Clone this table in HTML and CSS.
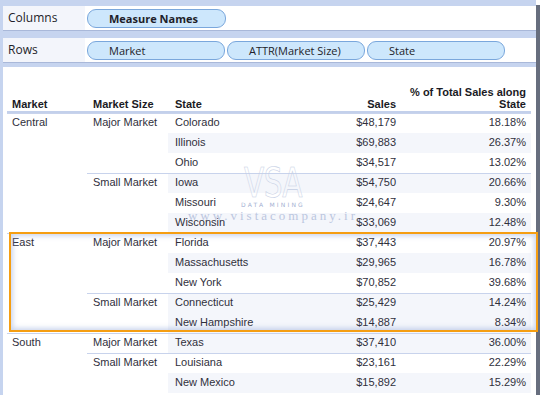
FILE: index.html
```html
<!DOCTYPE html>
<html>
<head>
<meta charset="utf-8">
<link rel="stylesheet" href="styles.css">
</head>
<body>
<div class="screen">
  <div class="workspace">
    <div class="shelf shelf-cols">
      <div class="shelf-label">Columns</div>
      <div class="shelf-field">
        <div class="pill pill-bold">Measure Names</div>
      </div>
    </div>
    <div class="shelf">
      <div class="shelf-label">Rows</div>
      <div class="shelf-field">
        <div class="pill">Market</div>
        <div class="pill">ATTR(Market Size)</div>
        <div class="pill">State</div>
      </div>
    </div>
    <div class="pane">
      <table class="grid">
        <colgroup>
          <col class="c-market"><col class="c-size"><col class="c-state"><col class="c-sales"><col class="c-pct">
        </colgroup>
        <thead>
          <tr>
            <th class="m">Market</th>
            <th class="z">Market Size</th>
            <th class="s">State</th>
            <th class="n">Sales</th>
            <th class="n">% of Total Sales along<br>State</th>
          </tr>
        </thead>
        <tbody>
          <tr class="mk">
            <td class="m" rowspan="6">Central</td>
            <td class="z" rowspan="3">Major Market</td>
            <td class="s">Colorado</td><td class="n">$48,179</td><td class="n">18.18%</td>
          </tr>
          <tr class="band"><td class="s">Illinois</td><td class="n">$69,883</td><td class="n">26.37%</td></tr>
          <tr><td class="s">Ohio</td><td class="n">$34,517</td><td class="n">13.02%</td></tr>
          <tr class="sz band">
            <td class="z" rowspan="3">Small Market</td>
            <td class="s">Iowa</td><td class="n">$54,750</td><td class="n">20.66%</td>
          </tr>
          <tr><td class="s">Missouri</td><td class="n">$24,647</td><td class="n">9.30%</td></tr>
          <tr class="band"><td class="s">Wisconsin</td><td class="n">$33,069</td><td class="n">12.48%</td></tr>
          <tr class="mk">
            <td class="m" rowspan="5">East</td>
            <td class="z" rowspan="3">Major Market</td>
            <td class="s">Florida</td><td class="n">$37,443</td><td class="n">20.97%</td>
          </tr>
          <tr class="band"><td class="s">Massachusetts</td><td class="n">$29,965</td><td class="n">16.78%</td></tr>
          <tr><td class="s">New York</td><td class="n">$70,852</td><td class="n">39.68%</td></tr>
          <tr class="sz band">
            <td class="z" rowspan="2">Small Market</td>
            <td class="s">Connecticut</td><td class="n">$25,429</td><td class="n">14.24%</td>
          </tr>
          <tr class="band"><td class="s">New Hampshire</td><td class="n">$14,887</td><td class="n">8.34%</td></tr>
          <tr class="mk band">
            <td class="m" rowspan="3">South</td>
            <td class="z">Major Market</td>
            <td class="s">Texas</td><td class="n">$37,410</td><td class="n">36.00%</td>
          </tr>
          <tr class="sz">
            <td class="z" rowspan="2">Small Market</td>
            <td class="s">Louisiana</td><td class="n">$23,161</td><td class="n">22.29%</td>
          </tr>
          <tr class="band"><td class="s">New Mexico</td><td class="n">$15,892</td><td class="n">15.29%</td></tr>
        </tbody>
      </table>
      <div class="watermark">
        <div class="wm-logo">VSA</div>
        <div class="wm-sub">DATA MINING</div>
        <div class="wm-url">www.vistacompany.ir</div>
      </div>
      <div class="highlight"></div>
    </div>
  </div>
  <div class="edge"></div>
  <div class="outside"></div>
</div>
</body>
</html>
```

FILE: styles.css
```css
html, body {
  margin: 0;
  padding: 0;
  background: #ffffff;
}

.screen {
  width: 546px;
  height: 395px;
  overflow: hidden;
  display: flex;
}

.workspace {
  width: 536px;
  height: 395px;
  background: #c6d4ef;
  padding: 6px 0 0 3px;
  box-sizing: border-box;
  display: flex;
  flex-direction: column;
  position: relative;
  z-index: 1;
}

.edge {
  width: 4px;
  margin-top: 5px;
  background: #676e7e;
}

.outside {
  flex: 1;
  background: #ffffff;
}

.shelf {
  height: 24px;
  display: flex;
  border-bottom: 1px solid #a9b8d9;
  margin-bottom: 4px;
}

.shelf-cols {
  margin-bottom: 7px;
}

.shelf-label {
  width: 82px;
  padding-left: 5px;
  box-sizing: border-box;
  background: #f3f5fb;
  font-family: "Open Sans", "Liberation Sans", sans-serif;
  font-size: 12px;
  line-height: 24px;
  color: #1e1e2a;
}

.shelf-field {
  flex: 1;
  background: #ffffff;
  display: flex;
  align-items: center;
  gap: 2px;
  padding-left: 2px;
}

.pill {
  width: 138px;
  height: 19px;
  box-sizing: border-box;
  border: 1px solid #7aa7dc;
  border-radius: 9px;
  background: #cde7fc;
  padding-left: 21px;
  font-family: "Open Sans", "Liberation Sans", sans-serif;
  font-size: 11px;
  line-height: 17px;
  color: #1e1e2a;
  white-space: nowrap;
}

.pill-bold {
  width: 139px;
  font-weight: bold;
}

.pane {
  flex: 1;
  background: #ffffff;
  position: relative;
  padding: 19px 0 0 4px;
}

.grid {
  border-collapse: collapse;
  table-layout: fixed;
  width: 524px;
  font-family: "Liberation Sans", Arial, sans-serif;
  font-size: 11px;
  color: #30303c;
}

.c-market { width: 80px; }
.c-size { width: 81px; }
.c-state { width: 132px; }
.c-sales { width: 101px; }
.c-pct { width: 130px; }

.grid th {
  font-weight: bold;
  text-align: left;
  vertical-align: bottom;
  line-height: 12px;
  padding: 0 0 1px 0;
  border-bottom: 2px solid #c3d0eb;
  color: #1a1a24;
  white-space: nowrap;
}

.grid td {
  height: 20px;
  line-height: 19px;
  padding: 0;
  vertical-align: top;
  white-space: nowrap;
}

.grid .m { padding-left: 5px; }
.grid .z { padding-left: 6px; }
.grid .s { padding-left: 7px; }
.grid .n { text-align: right; padding-right: 5px; }

.grid tr.band td.s,
.grid tr.band td.n {
  background: #f4f6fb;
}

.grid tr.mk td,
.grid tr.sz td {
  box-shadow: inset 0 1px 0 #c8d3ec;
}

.watermark {
  position: absolute;
  left: 180px;
  top: 96px;
  width: 180px;
  display: flex;
  flex-direction: column;
  align-items: center;
  pointer-events: none;
}

.wm-logo {
  font-family: "DejaVu Sans", sans-serif;
  font-size: 40px;
  line-height: 40px;
  color: transparent;
  -webkit-text-stroke: 0.6px #c4cee4;
  transform: scaleX(0.74);
  letter-spacing: -1px;
}

.wm-sub {
  font-family: "DejaVu Sans", sans-serif;
  font-size: 6px;
  line-height: 8px;
  letter-spacing: 2.2px;
  color: #a3b1d2;
  margin-top: -2px;
}

.wm-url {
  font-family: "Liberation Serif", serif;
  font-size: 13px;
  line-height: 13px;
  letter-spacing: 3px;
  color: #bcc7df;
}

.highlight {
  position: absolute;
  left: 6px;
  top: 165px;
  width: 529px;
  height: 100px;
  box-sizing: border-box;
  border: 2px solid #f59e12;
  box-shadow: inset 0 0 5px 2px rgba(140, 165, 215, 0.45);
  pointer-events: none;
}
```
